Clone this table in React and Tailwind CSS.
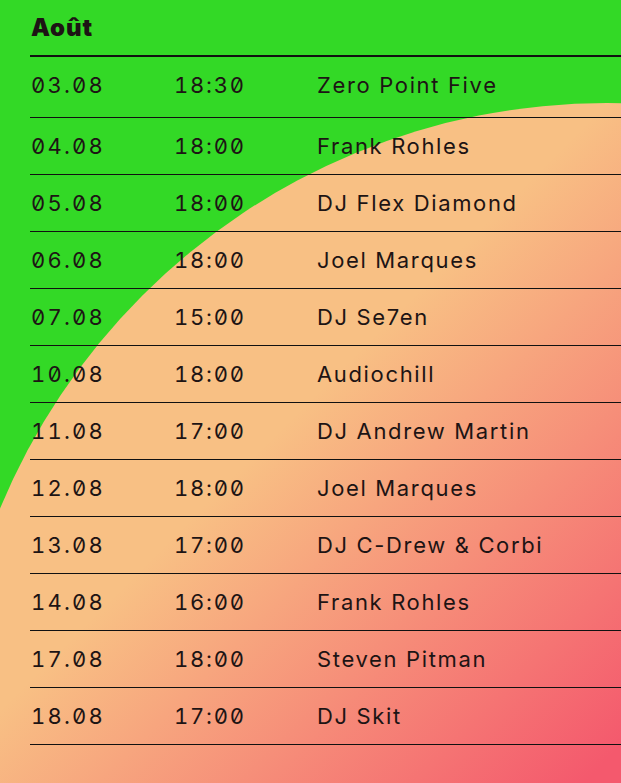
const rows = [
  ['03.08', '18:30', 'Zero Point Five'],
  ['04.08', '18:00', 'Frank Rohles'],
  ['05.08', '18:00', 'DJ Flex Diamond'],
  ['06.08', '18:00', 'Joel Marques'],
  ['07.08', '15:00', 'DJ Se7en'],
  ['10.08', '18:00', 'Audiochill'],
  ['11.08', '17:00', 'DJ Andrew Martin'],
  ['12.08', '18:00', 'Joel Marques'],
  ['13.08', '17:00', 'DJ C-Drew & Corbi'],
  ['14.08', '16:00', 'Frank Rohles'],
  ['17.08', '18:00', 'Steven Pitman'],
  ['18.08', '17:00', 'DJ Skit'],
]

export default function App() {
  return (
    <div className="relative w-[621px] h-[783px] overflow-hidden bg-[#33d926] text-[#1d1414] font-['Inter',sans-serif]">
      {/* decorative gradient disc */}
      <div className="absolute left-[-50px] top-[103px] w-[1314px] h-[1314px] rounded-full bg-[linear-gradient(135deg,#f8c084_25%,#f4596d_50%)]" />

      <div className="relative pl-[30px]">
        <div className="h-[57px] flex items-center border-b-2 border-[#111]">
          <h2 className="text-[24px] font-black tracking-[0.04em] pl-px">Août</h2>
        </div>
        {rows.map(([date, time, name], i) => (
          <div
            key={date}
            className={`flex items-center border-b border-[#111] text-[22px] ${i === 0 ? 'h-[61px] pb-[3px]' : 'h-[57px]'}`}
          >
            <span className="w-[144px] pl-px tracking-[0.1em] [font-feature-settings:'tnum','zero']">{date}</span>
            <span className="w-[143px] tracking-[0.08em] [font-feature-settings:'tnum','zero']">{time}</span>
            <span className="tracking-[0.075em]">{name}</span>
          </div>
        ))}
      </div>
    </div>
  )
}
